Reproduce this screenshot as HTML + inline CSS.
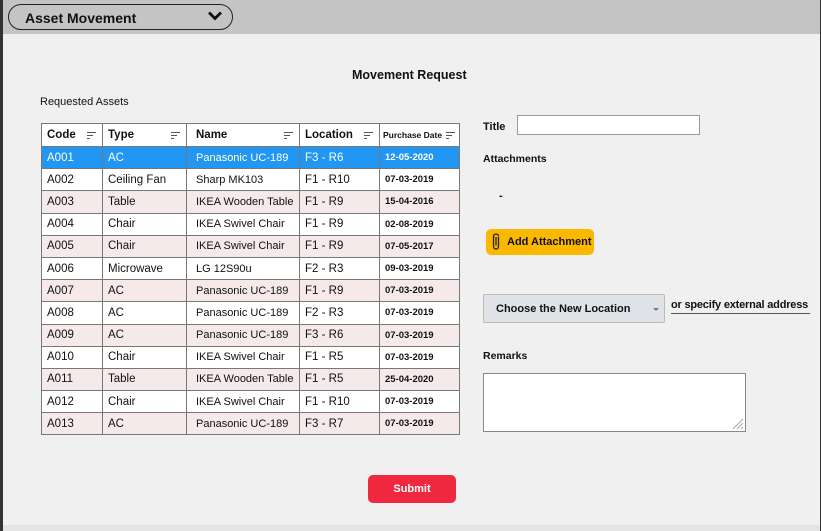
<!DOCTYPE html>
<html><head><style>
*{box-sizing:border-box;margin:0;padding:0}
body{width:821px;height:531px;background:#f0f0f0;font-family:"Liberation Sans",Arial,sans-serif;position:relative;overflow:hidden;color:#111}
.ls{position:absolute;left:0;top:0;width:3px;height:531px;background:#333}
.rs{position:absolute;right:0;top:0;width:1px;height:531px;background:#333}
.hdr{position:absolute;left:3px;top:0;width:817px;height:34px;background:#c4c4c4}
.sel{position:absolute;left:8px;top:4px;width:225px;height:26px;border:1.5px solid #222;border-radius:13px;font-weight:bold;font-size:14px;padding:5px 0 0 16px}
.bot{position:absolute;left:3px;top:525px;width:817px;height:6px;background:#e4e4e4}
.abs{position:absolute}
table{position:absolute;left:41px;top:123px;width:418px;table-layout:fixed;border-collapse:collapse;font-size:11.5px}
td,th{border:1.5px solid #777;height:22.2px;padding:0 5px;text-align:left;white-space:nowrap;overflow:hidden;vertical-align:middle}
td:nth-child(3),th:nth-child(3){padding-left:9px;font-size:11px}
th{background:#fff;font-size:11.5px;position:relative;height:23px}
th .s{position:absolute;right:6px;top:8px;width:9px}
th .s i{display:block;height:1px;background:#555;margin-bottom:2px}
td.d{font-size:9.5px;font-weight:bold}
tr.w td{background:#fff}
tr.p td{background:#f5e9e9}
tr.b td{background:#2196f3;color:#fff}
.btn{position:absolute;left:486px;top:229px;width:108px;height:26px;background:#fbb800;border-radius:5px;font-size:11px;font-weight:bold;padding:7px 0 0 21px}
</style></head><body>
<div class="hdr"></div>
<div class="ls"></div><div class="rs"></div>
<div class="sel">Asset Movement
<svg class="abs" style="left:198px;top:5px" width="16" height="12" viewBox="0 0 16 12"><path d="M2 2.5 L8 8.5 L14 2.5" stroke="#111" stroke-width="2.8" fill="none"/></svg></div>
<div class="abs" style="left:352px;top:68px;font-size:12.5px;font-weight:bold">Movement Request</div>
<div class="abs" style="left:40px;top:96px;font-size:11px">Requested Assets</div>
<table>
<colgroup><col style="width:61px"><col style="width:84px"><col style="width:113px"><col style="width:80px"><col style="width:80px"></colgroup>
<tr><th>Code<span class="s"><i></i><i style="width:6px"></i><i style="width:3px"></i></span></th><th>Type<span class="s"><i></i><i style="width:6px"></i><i style="width:3px"></i></span></th><th style="font-size:11.5px">Name<span class="s"><i></i><i style="width:6px"></i><i style="width:3px"></i></span></th><th>Location<span class="s"><i></i><i style="width:6px"></i><i style="width:3px"></i></span></th><th style="font-size:8.5px;padding-left:3px">Purchase Date<span class="s" style="right:4px"><i></i><i style="width:6px"></i><i style="width:3px"></i></span></th></tr>
<tr class="b"><td>A001</td><td>AC</td><td>Panasonic UC-189</td><td>F3 - R6</td><td class="d">12-05-2020</td></tr>
<tr class="w"><td>A002</td><td>Ceiling Fan</td><td>Sharp MK103</td><td>F1 - R10</td><td class="d">07-03-2019</td></tr>
<tr class="p"><td>A003</td><td>Table</td><td>IKEA Wooden Table</td><td>F1 - R9</td><td class="d">15-04-2016</td></tr>
<tr class="w"><td>A004</td><td>Chair</td><td>IKEA Swivel Chair</td><td>F1 - R9</td><td class="d">02-08-2019</td></tr>
<tr class="p"><td>A005</td><td>Chair</td><td>IKEA Swivel Chair</td><td>F1 - R9</td><td class="d">07-05-2017</td></tr>
<tr class="w"><td>A006</td><td>Microwave</td><td>LG 12S90u</td><td>F2 - R3</td><td class="d">09-03-2019</td></tr>
<tr class="p"><td>A007</td><td>AC</td><td>Panasonic UC-189</td><td>F1 - R9</td><td class="d">07-03-2019</td></tr>
<tr class="w"><td>A008</td><td>AC</td><td>Panasonic UC-189</td><td>F2 - R3</td><td class="d">07-03-2019</td></tr>
<tr class="p"><td>A009</td><td>AC</td><td>Panasonic UC-189</td><td>F3 - R6</td><td class="d">07-03-2019</td></tr>
<tr class="w"><td>A010</td><td>Chair</td><td>IKEA Swivel Chair</td><td>F1 - R5</td><td class="d">07-03-2019</td></tr>
<tr class="p"><td>A011</td><td>Table</td><td>IKEA Wooden Table</td><td>F1 - R5</td><td class="d">25-04-2020</td></tr>
<tr class="w"><td>A012</td><td>Chair</td><td>IKEA Swivel Chair</td><td>F1 - R10</td><td class="d">07-03-2019</td></tr>
<tr class="p"><td>A013</td><td>AC</td><td>Panasonic UC-189</td><td>F3 - R7</td><td class="d">07-03-2019</td></tr>
</table>
<div class="abs" style="left:483px;top:121px;font-size:11px;font-weight:bold">Title</div>
<div class="abs" style="left:517px;top:115px;width:183px;height:20px;background:#fff;border:1px solid #999"></div>
<div class="abs" style="left:483px;top:153px;font-size:10.5px;font-weight:bold">Attachments</div>
<div class="abs" style="left:499px;top:190px;font-size:11px;font-weight:bold">-</div>
<div class="btn">Add Attachment
<svg class="abs" style="left:5px;top:4px" width="10" height="18" viewBox="0 0 10 18"><path d="M7.5 4 V13.5 A2.5 2.5 0 0 1 2.5 13.5 V3.5 A2.5 2.5 0 0 1 7.5 3.5" stroke="#222" stroke-width="1.3" fill="none"/><path d="M5 4 V12.5" stroke="#222" stroke-width="1.3"/></svg></div>
<div class="abs" style="left:483px;top:294px;width:182px;height:29px;background:#dfe2e6;border:1px solid #bbb;border-radius:2px;font-size:11px;font-weight:bold;padding:8px 0 0 12px">Choose the New Location
<span class="abs" style="left:169px;top:13px;border-left:3px solid transparent;border-right:3px solid transparent;border-top:3px solid #777"></span></div>
<div class="abs" style="left:671px;top:299px;font-size:11px;font-weight:bold;border-bottom:1px solid #555;padding-bottom:2px;width:139px;white-space:nowrap;letter-spacing:-0.2px">or specify external address</div>
<div class="abs" style="left:483px;top:350px;font-size:10.5px;font-weight:bold">Remarks</div>
<div class="abs" style="left:483px;top:373px;width:263px;height:59px;background:#fff;border:1px solid #888">
<svg class="abs" style="right:1px;bottom:1px" width="12" height="12"><path d="M11 1 L1 11 M11 5 L5 11 M11 9 L9 11" stroke="#aaa" stroke-width="1"/></svg></div>
<div class="abs" style="left:368px;top:475px;width:88px;height:28px;background:#ef2840;border-radius:5px;color:#fff;font-size:11px;font-weight:bold;text-align:center;line-height:28px">Submit</div>
<div class="bot"></div>
</body></html>
